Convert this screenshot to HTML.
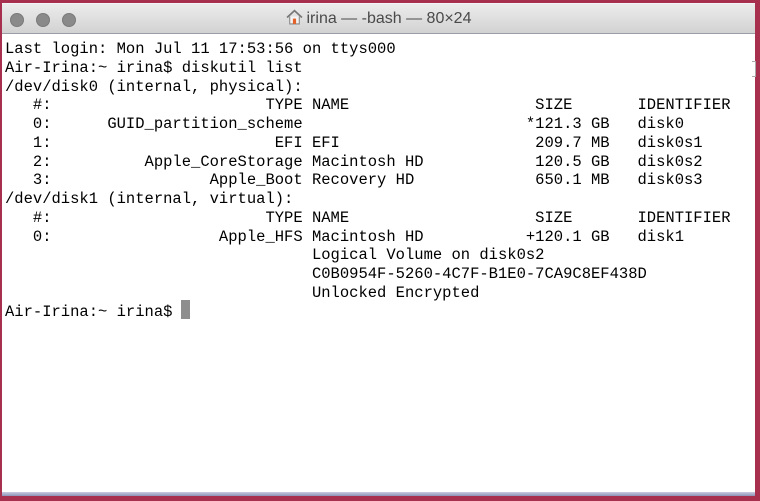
<!DOCTYPE html>
<html><head><meta charset="utf-8"><style>
html,body{margin:0;padding:0;}
body{width:760px;height:501px;background:#a8304f;position:relative;overflow:hidden;}
#win{position:absolute;left:2px;top:3px;width:753px;height:492px;background:#fff;}
#tb{position:absolute;left:0;top:0;width:753px;height:31px;background:linear-gradient(#ececec,#d2d2d2);border-bottom:1px solid #9c9ca6;box-sizing:border-box;border-top:1px solid #f4f4f8;}
.c{position:absolute;top:9px;width:14px;height:14px;border-radius:50%;background:#8a8a8a;border:1px solid #7a7a7a;box-sizing:border-box;}
#title{position:absolute;left:0;right:0;top:5px;text-align:center;font:16px "Liberation Sans",sans-serif;color:#4a4a4a;}
pre{position:absolute;left:3px;top:37px;margin:0;font:15.5px/18.75px "Liberation Mono",monospace;color:#000;}
#cur{position:absolute;left:179px;top:297px;width:9px;height:19px;background:#8e8e8e;}
#bot{position:absolute;left:2px;top:492px;width:753px;height:4px;background:linear-gradient(#c8cbe0,#8d93b8);}
#br{position:absolute;left:750px;top:58px;width:3px;height:14px;border:1px solid #aaa;border-left:none;}
</style></head><body>
<div id="win">
<div id="tb">
<div class="c" style="left:8px"></div><div class="c" style="left:34px"></div><div class="c" style="left:60px"></div>
<div id="title"><svg width="17" height="16" viewBox="0 0 16 15" style="vertical-align:-2px;margin-right:4px"><path d="M1 8 L8 1.5 L15 8" fill="none" stroke="#777" stroke-width="1.6"/><path d="M3.5 7 V14 H12.5 V7" fill="#f4f4f4" stroke="#888" stroke-width="1"/><rect x="6.5" y="9" width="3" height="5" fill="#e4622a"/></svg>irina — -bash — 80×24</div>
</div>
<pre>Last login: Mon Jul 11 17:53:56 on ttys000
Air-Irina:~ irina$ diskutil list
/dev/disk0 (internal, physical):
   #:                       TYPE NAME                    SIZE       IDENTIFIER
   0:      GUID_partition_scheme                        *121.3 GB   disk0
   1:                        EFI EFI                     209.7 MB   disk0s1
   2:          Apple_CoreStorage Macintosh HD            120.5 GB   disk0s2
   3:                 Apple_Boot Recovery HD             650.1 MB   disk0s3
/dev/disk1 (internal, virtual):
   #:                       TYPE NAME                    SIZE       IDENTIFIER
   0:                  Apple_HFS Macintosh HD           +120.1 GB   disk1
                                 Logical Volume on disk0s2
                                 C0B0954F-5260-4C7F-B1E0-7CA9C8EF438D
                                 Unlocked Encrypted
Air-Irina:~ irina$ </pre>
<div id="cur"></div>
<div id="br"></div>
</div>
<div id="bot"></div>
</body></html>
